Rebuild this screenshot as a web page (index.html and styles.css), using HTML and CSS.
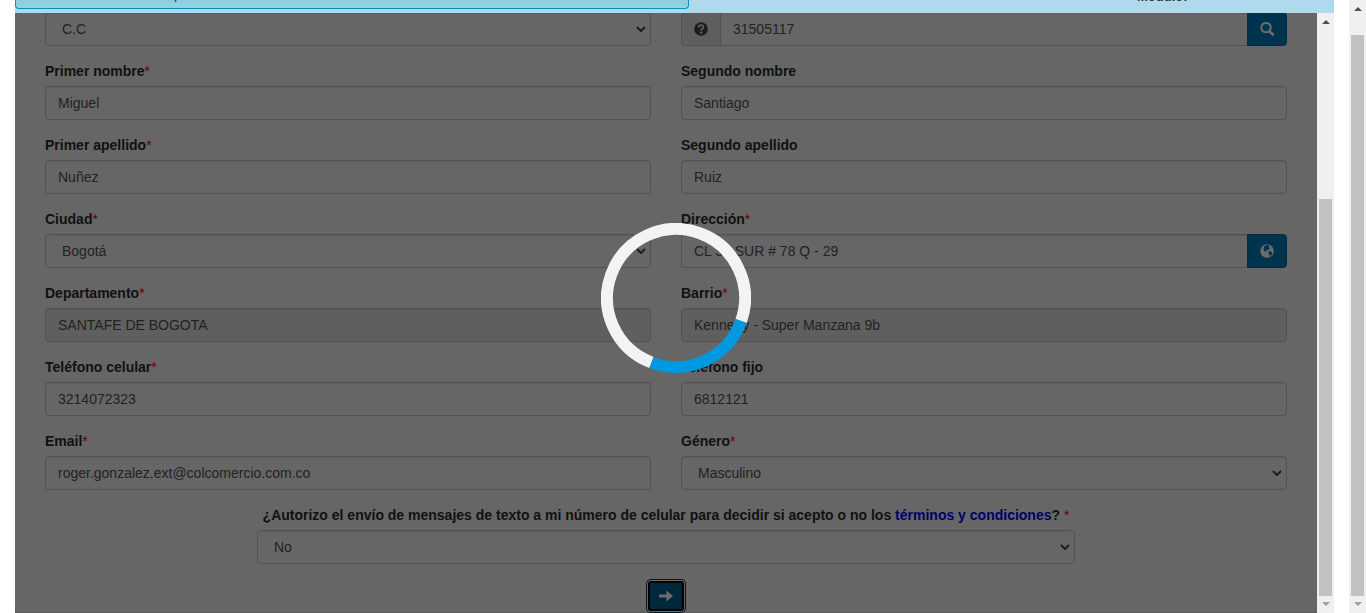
FILE: index.html
```html
<!DOCTYPE html>
<html lang="es">
<head>
<meta charset="utf-8">
<title>Registro de cliente</title>
<link rel="stylesheet" href="styles.css">
</head>
<body>
<div class="page">
  <main class="modal">
    <header class="banner">
      <div class="banner-box"><span>p</span></div>
      <span class="banner-module">Modulo:</span>
    </header>
    <div class="body">
      <form class="form">
        <div class="grid">
          <div class="field"><div class="control select"><span>C.C</span><svg class="chev" viewBox="0 0 10 6"><path d="M1 1l4 4 4-4"/></svg></div></div>
          <div class="field"><div class="group">
            <span class="addon"><svg class="icon" viewBox="0 0 14 14"><circle cx="7" cy="7" r="6.8" fill="#1c1c1c"/><path d="M4.7 5.4C4.8 2.4 9.5 2.5 9.4 5.2C9.3 6.8 7.2 6.8 7.1 8.5" fill="none" stroke="#5f5f5f" stroke-width="1.8"/><path d="M6 9.6h2.2v2H6z" fill="#5f5f5f"/></svg></span>
            <div class="control mid">31505117</div>
            <span class="btn"><svg class="icon" viewBox="0 0 14 14"><circle cx="6" cy="5.6" r="4.7" fill="none" stroke="#6b6b6b" stroke-width="2.1"/><path d="M9.4 9.2l3.8 3.6" stroke="#6b6b6b" stroke-width="2.6" stroke-linecap="round"/></svg></span>
          </div></div>

          <div class="field"><label>Primer nombre<i>*</i></label><div class="control">Miguel</div></div>
          <div class="field"><label>Segundo nombre</label><div class="control">Santiago</div></div>

          <div class="field"><label>Primer apellido<i>*</i></label><div class="control">Nuñez</div></div>
          <div class="field"><label>Segundo apellido</label><div class="control">Ruiz</div></div>

          <div class="field"><label>Ciudad<i>*</i></label><div class="control select"><span>Bogotá</span><svg class="chev" viewBox="0 0 10 6"><path d="M1 1l4 4 4-4"/></svg></div></div>
          <div class="field"><label>Dirección<i>*</i></label><div class="group">
            <div class="control first">CL 38 SUR # 78 Q - 29</div>
            <span class="btn"><svg class="icon" viewBox="0 0 14 14"><circle cx="7" cy="7" r="6.8" fill="#6b6b6b"/><path d="M4.2 2.2L7 1l2.4.8-.7 1.6 1 1L8.2 6 6 6.3l.3 1.6L4.4 7 3.6 5zM8 7.6l2.4-.3 2 1.5-1 2.4-1.6.8-.6-2z" fill="#00334e"/></svg></span>
          </div></div>

          <div class="field"><label>Departamento<i>*</i></label><div class="control off">SANTAFE DE BOGOTA</div></div>
          <div class="field"><label>Barrio<i>*</i></label><div class="control off">Kennedy - Super Manzana 9b</div></div>

          <div class="field"><label>Teléfono celular<i>*</i></label><div class="control">3214072323</div></div>
          <div class="field"><label>Teléfono fijo</label><div class="control">6812121</div></div>

          <div class="field"><label>Email<i>*</i></label><div class="control">roger.gonzalez.ext@colcomercio.com.co</div></div>
          <div class="field"><label>Género<i>*</i></label><div class="control select"><span>Masculino</span><svg class="chev" viewBox="0 0 10 6"><path d="M1 1l4 4 4-4"/></svg></div></div>
        </div>
        <div class="field consent">
          <label>¿Autorizo el envío de mensajes de texto a mi número de celular para decidir si acepto o no los <a>términos y condiciones</a>? <i>*</i></label>
          <div class="control select"><span>No</span><svg class="chev" viewBox="0 0 10 6"><path d="M1 1l4 4 4-4"/></svg></div>
        </div>
        <div class="next"><svg class="icon" viewBox="0 0 14 14"><path d="M0 5.6h7.4V1.4L14 7l-6.6 5.6V8.4H0z" fill="#6b6b6b"/></svg></div>
      </form>
      <div class="scroll inner"><b class="up"></b><div class="thumb"></div><b class="down"></b></div>
    </div>
  </main>
  <div class="scroll outer"><b class="up"></b><div class="thumb"></div><b class="down"></b></div>
</div>
<svg class="spinner" viewBox="0 0 150 150"><path d="M50.5 139.5A69 69 0 1 1 140.1 98" fill="none" stroke="#f3f3f3" stroke-width="12"/><path d="M140.1 98A69 69 0 0 1 50.5 139.5" fill="none" stroke="#0099df" stroke-width="12"/></svg>
</body>
</html>
```
FILE: styles.css
```css
* { box-sizing: border-box; }
body { margin: 0; background: #fff; color: #222; font: 14px/20px "Liberation Sans", Arial, sans-serif; overflow: hidden; }
.page { display: flex; gap: 15px; height: 613px; padding-left: 15px; }
.modal { width: 1319px; display: flex; flex-direction: column; }
.banner { height: 13px; background: #b0d9ed; display: flex; overflow: hidden; align-items: flex-start; }
.banner-box { width: 674px; height: 9px; border: 1px solid #0095b8; border-top: 0; border-radius: 0 0 4px 4px; background: linear-gradient(#8acedd, #96d3e5); padding-left: 158px; color: #333; }
.banner-box span { display: block; margin-top: -16px; }
.banner-module { margin: -13px 0 0 448px; color: #333; font-weight: bold; font-size: 13px; }
.body { flex: 1; min-height: 0; display: flex; overflow: hidden; }
.form { width: 1302px; padding: 0 30px; background: #666; margin-top: -1px; box-shadow: inset 0 -1px #5c5c5c; }
.grid { display: grid; grid-template-columns: 606px 606px; column-gap: 30px; row-gap: 15px; }
.field label { display: block; height: 20px; margin-bottom: 5px; font-weight: bold; color: #111; white-space: nowrap; }
.field i { color: #600; font-style: normal; font-weight: normal; }
.field a { color: #000066; }
.control { height: 34px; padding: 6px 12px; border: 1px solid #525252; border-radius: 4px; box-shadow: inset 0 1px 1px rgba(0,0,0,.075); color: #222; }
.select { display: flex; justify-content: space-between; align-items: center; padding: 0 4px 0 16px; }
.chev { width: 10px; height: 6px; fill: none; stroke: #1c1c1c; stroke-width: 2; }
.off { background: #5f5f5f; }
.group { display: flex; }
.group .control { flex: 1; }
.group .first { border-radius: 4px 0 0 4px; border-right: 0; }
.group .mid { border-radius: 0; border-right: 0; }
.addon { width: 39px; height: 34px; display: grid; place-items: center; background: #5f5f5f; border: 1px solid #525252; border-right: 0; border-radius: 4px 0 0 4px; }
.btn { width: 40px; height: 34px; display: grid; place-items: center; background: #00334e; border: 1px solid #002b43; border-radius: 0 4px 4px 0; }
.icon { width: 14px; height: 14px; display: block; }
.consent { width: 818px; margin: 15px auto 0; }
.consent label { text-align: center; }
.next { width: 36px; height: 30px; margin: 17px auto 0; display: grid; place-items: center; background: #00283c; border: 2px solid #000; border-radius: 3px; box-shadow: 0 0 0 1px #666, 0 0 0 2px #061828; }
.scroll { width: 17px; background: #f0f0f0; display: flex; flex-direction: column; align-items: center; }
.thumb { width: 13px; background: #c1c1c1; }
.scroll b { border: 4px solid transparent; width: 0; height: 0; border-top-width: 0; border-bottom: 4px solid #505050; }
.scroll b.down { border-top: 4px solid #a0a0a0; border-bottom-width: 0; margin-top: 6px; }
.inner .up { margin-top: 7px; }
.inner .thumb { height: 397px; margin-top: 175px; }
.outer .up { margin-top: 7px; }
.outer .thumb { height: 561px; margin-top: 24px; }
.spinner { position: absolute; left: 601px; top: 223px; width: 150px; height: 150px; }
```
